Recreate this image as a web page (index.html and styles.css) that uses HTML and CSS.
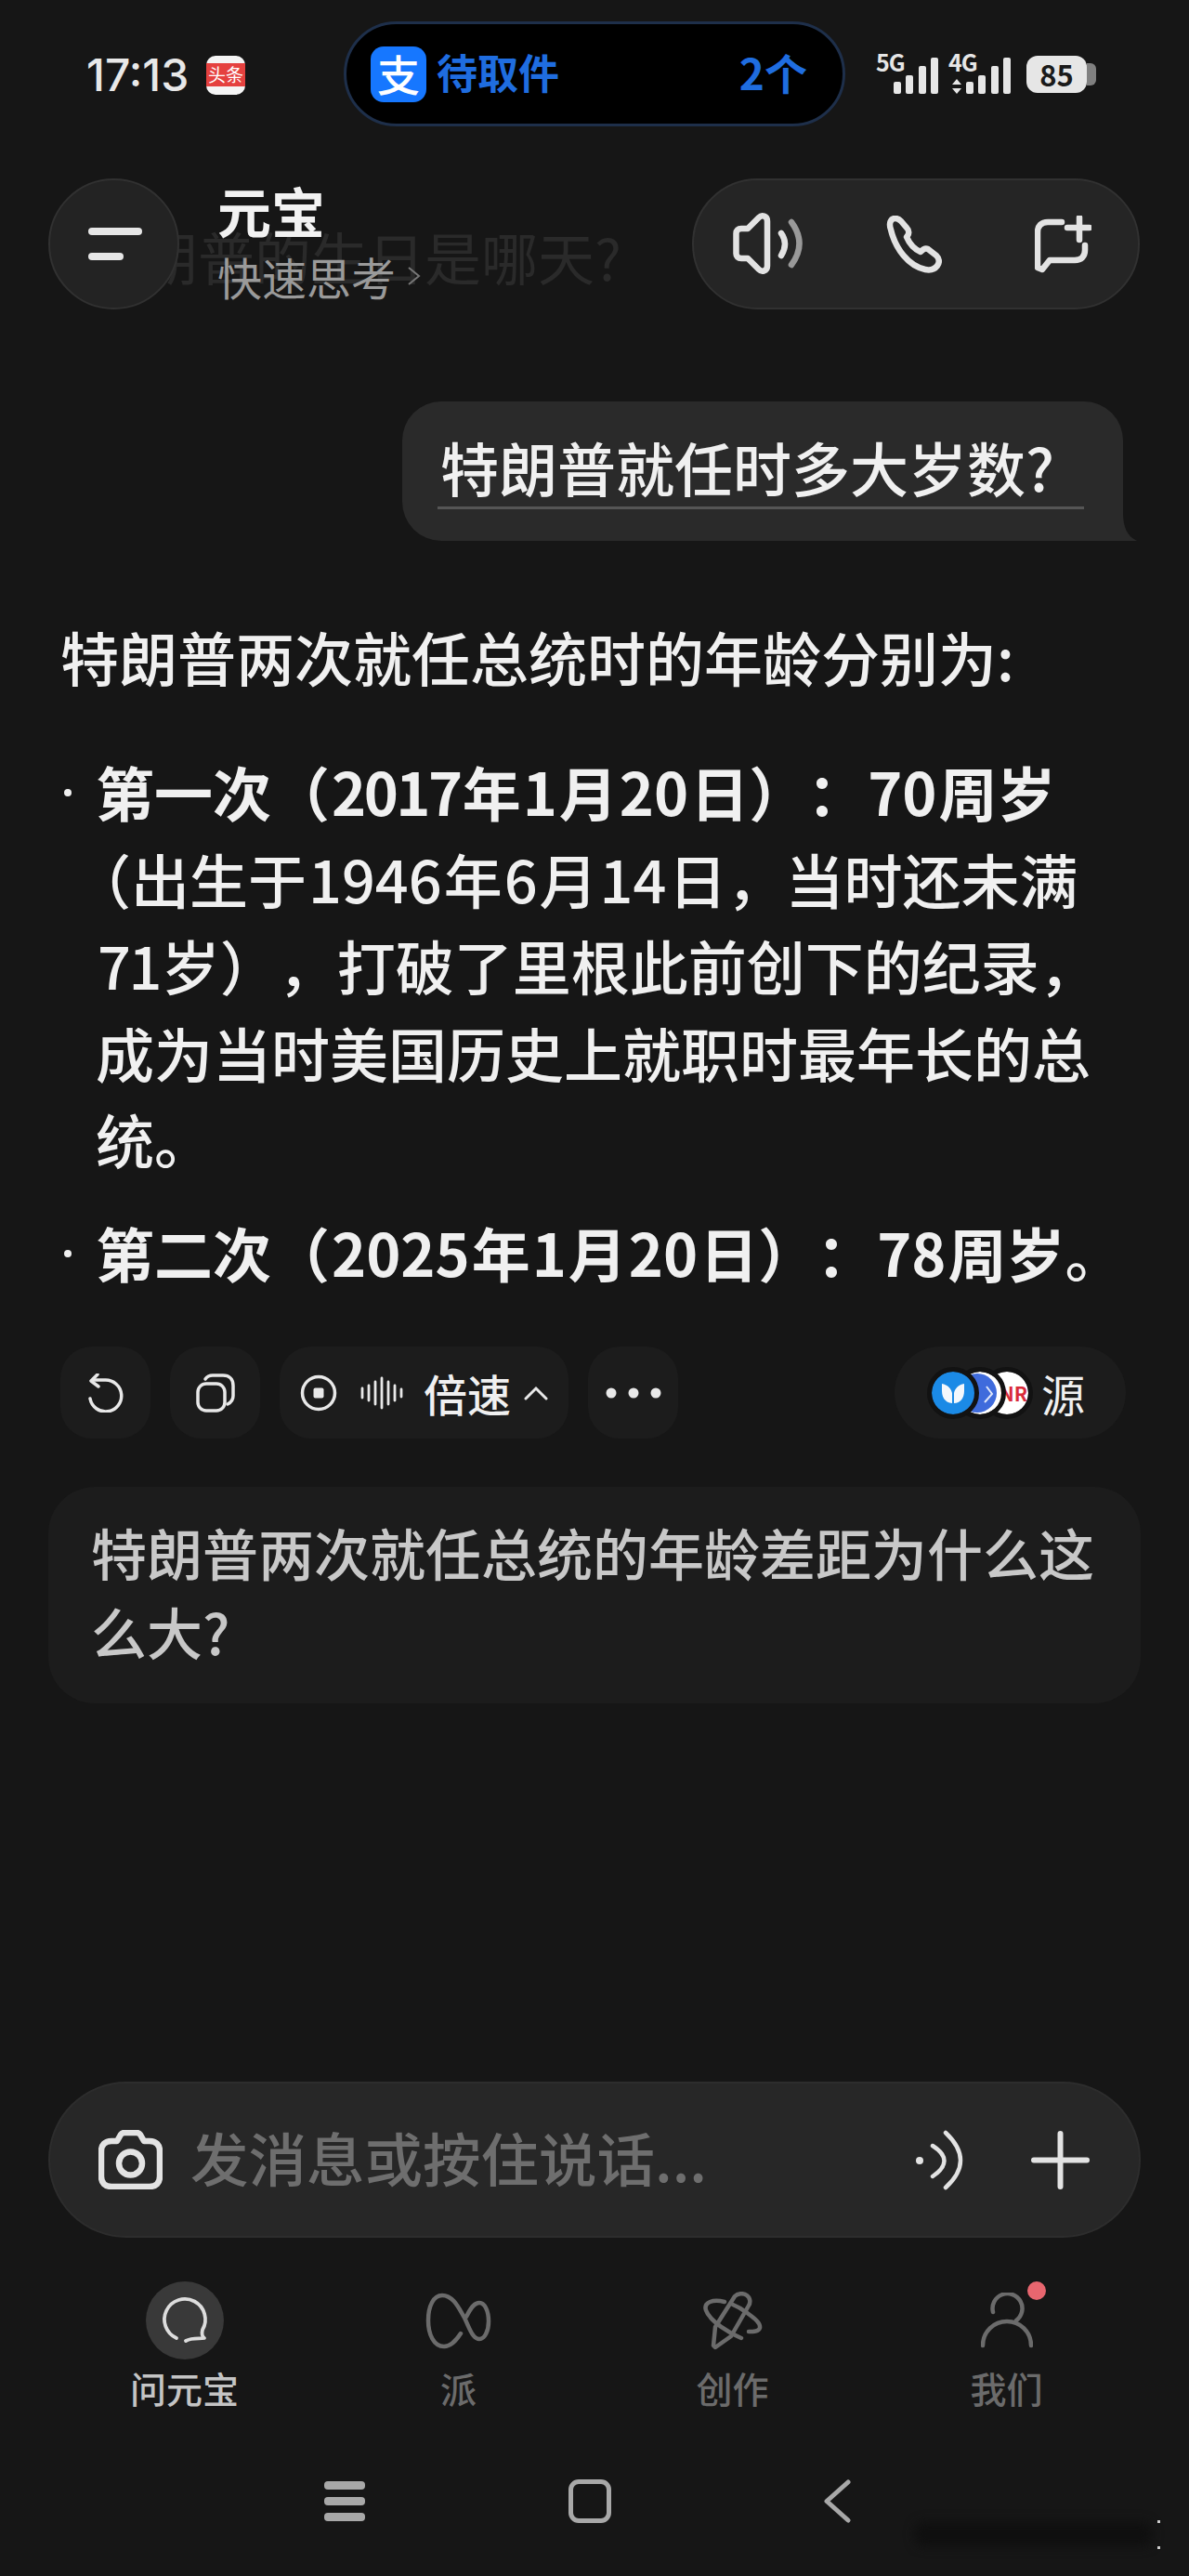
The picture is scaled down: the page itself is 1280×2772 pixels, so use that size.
FILE: index.html
```html
<!DOCTYPE html>
<html lang="zh-CN">
<head>
    <meta charset="UTF-8">
    <meta name="viewport" content="width=device-width, initial-scale=1.0">
    <title>元宝</title>
    <link rel="stylesheet" href="styles.css">
</head>
<body>
    <!-- Status bar -->
    <div class="status-bar">
        <span class="clock">17:13</span>
        <span class="toutiao"><span class="toutiao-band">头条</span></span>
        <div class="island">
            <span class="alipay">支</span>
            <span class="island-text">待取件</span>
            <span class="island-count">2个</span>
        </div>
        <div class="signal">
            <span class="net-label">5G</span>
            <div class="bars"><i class="b1"></i><i class="b2"></i><i class="b3"></i><i class="b4"></i></div>
        </div>
        <div class="signal signal-second">
            <span class="net-label">4G</span>
            <svg class="net-arrows" width="12" height="16" viewBox="0 0 12 16"><path d="M6 0 L11 6 H1 Z M1 10 H11 L6 16 Z" fill="#e6e6e6"/></svg>
            <div class="bars"><i class="b1"></i><i class="b2"></i><i class="b3"></i><i class="b4"></i></div>
        </div>
        <div class="battery"><span class="battery-level">85</span><span class="battery-tip"></span></div>
    </div>

    <!-- Top bar -->
    <header class="top-bar">
        <div class="ghost-row">特朗普的生日是哪天?</div>
        <button class="menu-button">
            <span class="menu-line"></span>
            <span class="menu-line menu-line-short"></span>
        </button>
        <div class="title-block">
            <div class="title">元宝</div>
            <div class="subtitle">快速思考
                <svg width="16" height="22" viewBox="0 0 16 22"><path d="M2 2 L13 11 L2 20" fill="none" stroke="#777" stroke-width="2"/></svg>
            </div>
        </div>
        <div class="top-actions">
            <svg width="78" height="68" viewBox="0 0 78 68" fill="none" stroke="#e3e3e3" stroke-width="6.5" stroke-linecap="round" stroke-linejoin="round">
                <path d="M37 9 C37 3 31 2 28 5 L16 17 H9 C5.5 17 3.5 19 3.5 22 V44 C3.5 47 5.5 49 9 49 H16 L28 61 C31 64 37 63 37 57 Z"/>
                <path d="M52 22 Q60 33 52 46"/>
                <path d="M63 10 Q80 33 63 56" stroke="#999"/>
            </svg>
            <svg width="60" height="62" viewBox="0 0 60 62" fill="none" stroke="#e3e3e3" stroke-width="6.5" stroke-linejoin="round">
                <path d="M5 15 C2.5 8 5 3.5 9 3 C12 2.7 14 4 16 6 L22 13 C25 16 25 20 22 23 C25 30 30 36 37 39 C39 37 41 34 45 36 L54 43 C57 46 58 50 55 54 C52 58 47 59 42 58 C24 54 10 36 5 15 Z"/>
            </svg>
            <svg class="new-chat" width="61" height="62" viewBox="0 0 61 62" fill="none" stroke="#e3e3e3" stroke-width="6.5" stroke-linecap="round" stroke-linejoin="round">
                <path d="M29 7 H14 C7 7 3 11 3 18 V56 L8 58 L16 48 H43 C50 48 54 44 54 37 V32"/>
                <path d="M35 13 H59 M48 2 V26"/>
            </svg>
        </div>
    </header>

    <!-- Chat -->
    <main class="chat">
        <div class="user-bubble">
            <span class="user-text">特朗普就任时多大岁数?</span>
            <svg class="bubble-tail" width="15" height="30" viewBox="0 0 15 30"><path d="M0 0 C0 14 4 25 15 30 H0 Z" fill="#2a2a2a"/></svg>
        </div>

        <p class="answer-lead">特朗普两次就任总统时的年龄分别为:</p>
        <ul class="answer-list">
            <li><strong>第一次（<span class="num num-tight">2017</span>年<span class="num">1</span>月<span class="num">20</span>日）：<span class="num">70</span>周岁</strong><br><span class="line-paren">（</span>出生于<span class="num">1946</span>年<span class="num">6</span>月<span class="num">14</span>日，当时还未满<br><span class="num num-tight">71</span>岁），打破了里根此前创下的纪录，<br>成为当时美国历史上就职时最年长的总<br>统。</li>
            <li><strong>第二次（<span class="num">2025</span>年<span class="num">1</span>月<span class="num">20</span>日）：<span class="num">78</span>周岁</strong>。</li>
        </ul>

        <div class="toolbar">
            <button class="tool-button">
                <svg width="42" height="42" viewBox="0 0 42 42" fill="none" stroke="#e8e8e8" stroke-width="3.5" stroke-linecap="round" stroke-linejoin="round">
                    <path d="M8 7 H20 A17 17 0 1 1 4 27"/>
                    <path d="M12 1 L5 8 L13 14"/>
                </svg>
            </button>
            <button class="tool-button">
                <svg width="42" height="42" viewBox="0 0 42 42" fill="none" stroke="#e8e8e8" stroke-width="3.5" stroke-linecap="round">
                    <rect x="2" y="11" width="29" height="29" rx="9"/>
                    <path d="M10 6 C12 3 14 2 18 2 H29 C36 2 40 6 40 13 V24 C40 28 38 31 34 33"/>
                </svg>
            </button>
            <button class="tool-button tool-speed">
                <svg width="40" height="42" viewBox="0 0 40 42" fill="none" stroke="#e8e8e8" stroke-width="3.5">
                    <circle cx="20" cy="21" r="17.5"/>
                    <rect x="14.5" y="15.5" width="11" height="11" rx="2" fill="#e8e8e8" stroke="none"/>
                </svg>
                <svg class="wave" width="46" height="42" viewBox="0 0 46 42" stroke="#e8e8e8" stroke-width="2.8" stroke-linecap="round">
                    <path d="M2 16 V26 M9 13 V29 M16 9 V33 M23 5 V37 M30 9 V33 M37 13 V29 M44 17 V25"/>
                </svg>
                <span class="speed-label">倍速</span>
                <svg width="26" height="16" viewBox="0 0 26 16" fill="none" stroke="#e8e8e8" stroke-width="3" stroke-linecap="round"><path d="M2 14 L13 3 L24 14"/></svg>
            </button>
            <button class="tool-button">
                <svg width="60" height="14" viewBox="0 0 60 14" fill="#e8e8e8"><circle cx="6" cy="7" r="5.5"/><circle cx="30" cy="7" r="5.5"/><circle cx="54" cy="7" r="5.5"/></svg>
            </button>
            <button class="tool-button tool-source">
                <span class="source-dot source-blue">
                    <svg width="26" height="24" viewBox="0 0 26 24" fill="#f4f8fc"><path d="M1 2 C7 3 11 7 12 12 V23 C5 23 1 17 1 10 Z M25 2 C19 3 15 7 14 12 V23 C21 23 25 17 25 10 Z"/></svg>
                </span>
                <span class="source-dot source-indigo">
                    <svg width="46" height="46" viewBox="0 0 46 46"><circle cx="23" cy="23" r="23" fill="#fff"/><circle cx="20" cy="23" r="21" fill="#3f6bdc"/><path d="M30 16 L36 24 L28 33" fill="none" stroke="#dfe7fa" stroke-width="2"/></svg>
                </span>
                <span class="source-dot source-white"><span class="source-nr">NR</span></span>
                <span class="source-label">源</span>
            </button>
        </div>

        <div class="suggestion">特朗普两次就任总统的年龄差距为什么这么大?</div>
    </main>

    <!-- Composer -->
    <div class="composer">
        <svg width="69" height="64" viewBox="0 0 69 64" fill="none" stroke="#e3e3e3" stroke-width="6.5" stroke-linejoin="round">
            <path d="M14 12 H20 L24 5 C25 3.5 26 3 28 3 H41 C43 3 44 3.5 45 5 L49 12 H55 C62 12 66 16 66 23 V50 C66 57 62 61 55 61 H14 C7 61 3 57 3 50 V23 C3 16 7 12 14 12 Z"/>
            <circle cx="34.5" cy="36" r="12.5"/>
        </svg>
        <span class="composer-placeholder">发消息或按住说话...</span>
        <svg class="composer-voice" width="55" height="65" viewBox="0 0 55 65" fill="none" stroke="#e3e3e3" stroke-width="4.5" stroke-linecap="round">
            <circle cx="7" cy="33" r="4" fill="#e3e3e3" stroke="none"/>
            <path d="M21 17 Q46 33 21 50"/>
            <path d="M35 3 Q67 33 35 62"/>
        </svg>
        <svg width="63" height="63" viewBox="0 0 63 63" stroke="#e3e3e3" stroke-width="6" stroke-linecap="round"><path d="M3 31.5 H60 M31.5 3 V60"/></svg>
    </div>

    <!-- Tabs -->
    <nav class="tabs">
        <div class="tab tab-active">
            <span class="tab-icon tab-icon-active">
                <svg width="84" height="84" viewBox="0 0 84 84" fill="none" stroke="#ddd" stroke-width="3.8" stroke-linecap="round" stroke-linejoin="round">
                    <path d="M33 61 A22 22 0 1 1 61 52 C60 56 60 59 63 61 C58 62 50 60 43 64"/>
                </svg>
            </span>
            <span class="tab-label">问元宝</span>
        </div>
        <div class="tab">
            <span class="tab-icon">
                <svg width="71" height="61" viewBox="0 0 71 61" fill="none" stroke="#6b6b6b" stroke-width="4.5" stroke-linecap="round">
                    <path d="M38 44 C32 53 27 58 20 58 C9 58 3 45 3 30 C3 14 9 3 18 3 C30 3 36 17 42 27 C47 38 51 50 58 50 C64 50 68 41 68 31 C68 20 64 11 58 11 C52 11 48 18 44 26"/>
                </svg>
            </span>
            <span class="tab-label">派</span>
        </div>
        <div class="tab">
            <span class="tab-icon">
                <svg width="65" height="63" viewBox="0 0 65 63" fill="none" stroke="#6b6b6b" stroke-width="4.5" stroke-linecap="round" stroke-linejoin="round">
                    <path d="M35 5 C38 2 44 1 48 4 C52 7 52 12 50 15 L31 48 L14 60 L12 58 L14 38 Z"/>
                    <path d="M42 50 C30 45 8 32 4 20 C1 11 12 8 24 11 M33 14 C38 16 43 19 47 22 C55 28 63 33 62 39 C61 43 55 43 50 43"/>
                </svg>
            </span>
            <span class="tab-label">创作</span>
        </div>
        <div class="tab">
            <span class="tab-icon">
                <svg width="56" height="60" viewBox="0 0 56 60" fill="none" stroke="#6b6b6b" stroke-width="4.5" stroke-linecap="round">
                    <path d="M13 21 A16 16 0 1 1 38 30"/>
                    <path d="M2 57 C2 42 14 31 28 31 C42 31 54 42 54 57"/>
                </svg>
                <span class="tab-badge"></span>
            </span>
            <span class="tab-label">我们</span>
        </div>
    </nav>

    <!-- System nav -->
    <div class="system-nav">
        <div class="nav-menu"><span></span><span></span><span></span></div>
        <div class="nav-home"></div>
        <svg width="29" height="47" viewBox="0 0 29 47" fill="none" stroke="#a8a8a8" stroke-width="5" stroke-linecap="round" stroke-linejoin="round"><path d="M26 3 L3 23.5 L26 44"/></svg>
    </div>
    <div class="watermark"></div>
    <div class="watermark-specks"></div>
</body>
</html>
```

FILE: styles.css
```css
* {
    box-sizing: border-box;
}

html,
body {
    margin: 0;
    height: 100%;
}

body {
    position: relative;
    display: flex;
    flex-direction: column;
    width: 1280px;
    height: 2772px;
    overflow: hidden;
    background-color: #161616;
    color: #f0f0f0;
    font-family: "Noto Sans CJK SC", "Noto Sans", sans-serif;
}

button {
    border: none;
    padding: 0;
    font-family: inherit;
    color: inherit;
}

svg {
    display: block;
    flex-shrink: 0;
}

/* Status bar */
.status-bar {
    display: flex;
    align-items: center;
    height: 113px;
    margin-top: 23px;
    padding-left: 93px;
}

.clock {
    width: 110px;
    font-family: Inter, sans-serif;
    font-size: 48px;
    line-height: 56px;
    font-weight: 500;
    white-space: nowrap;
    color: #e8e8e8;
    margin-top: 2px;
}

.toutiao {
    display: flex;
    align-items: center;
    width: 42px;
    height: 42px;
    margin-left: 19px;
    margin-top: 2px;
    border-radius: 10px;
    background-color: #f5f5f5;
}

.toutiao-band {
    width: 100%;
    height: 25px;
    line-height: 24px;
    text-align: center;
    font-size: 19px;
    color: #fff;
    background-color: #e5413f;
}

.island {
    display: flex;
    align-items: center;
    width: 540px;
    height: 113px;
    margin-left: 106px;
    padding: 0 38px 0 26px;
    border: 3px solid #1e2f4a;
    border-radius: 57px;
    background-color: #000;
}

.alipay {
    width: 60px;
    height: 60px;
    line-height: 56px;
    text-align: center;
    border-radius: 14px;
    background-color: #1677ff;
    color: #fff;
    font-size: 46px;
    font-weight: 500;
}

.island-text {
    margin: -6px 0 0 11px;
    font-size: 44px;
    font-weight: 700;
    color: #1f6de0;
}

.island-count {
    margin: -6px 0 0 auto;
    font-size: 46px;
    font-weight: 700;
    color: #1f6de0;
}

.signal {
    position: relative;
    display: flex;
    justify-content: flex-end;
    align-items: flex-end;
    width: 67px;
    height: 44px;
    margin-left: 33px;
    margin-top: -2px;
}

.signal-second {
    margin-left: 11px;
}

.net-label {
    position: absolute;
    left: 0;
    top: -3px;
    font-size: 25px;
    line-height: 25px;
    font-weight: 700;
    letter-spacing: -1px;
    color: #e6e6e6;
}

.net-arrows {
    position: absolute;
    left: 3px;
    bottom: 0;
}

.bars {
    display: flex;
    align-items: flex-end;
    gap: 5.5px;
}

.bars i {
    display: block;
    width: 8px;
    border-radius: 2px;
    background-color: #e6e6e6;
}

.bars .b1 {
    height: 13px;
}

.bars .b2 {
    height: 20px;
}

.bars .b3 {
    height: 30px;
}

.bars .b4 {
    height: 39px;
}

.battery {
    display: flex;
    align-items: center;
    margin-left: 17px;
}

.battery-level {
    width: 65px;
    height: 40px;
    line-height: 39px;
    text-align: center;
    border-radius: 12px;
    background-color: #e6e6e6;
    color: #1a1a1a;
    font-size: 31px;
    font-weight: 700;
}

.battery-tip {
    width: 10px;
    height: 24px;
    border-radius: 0 6px 6px 0;
    background-color: #808080;
}

/* Top bar */
.top-bar {
    position: relative;
    display: flex;
    align-items: center;
    height: 141px;
    margin-top: 56px;
    padding: 0 53px 0 52px;
}

.ghost-row {
    position: absolute;
    left: 91px;
    top: 44px;
    font-size: 61px;
    line-height: 80px;
    color: #2a2a2a;
}

.menu-button {
    position: relative;
    display: flex;
    flex-direction: column;
    justify-content: center;
    gap: 19px;
    width: 141px;
    height: 141px;
    padding-left: 41px;
    border: 2px solid #313131;
    border-radius: 50%;
    background-color: #232323;
}

.menu-line {
    display: block;
    width: 58px;
    height: 8px;
    border-radius: 4px;
    background-color: #e6e6e6;
}

.menu-line-short {
    width: 38px;
}

.title-block {
    position: relative;
    margin: 0 0 0 41px;
}

.title {
    font-size: 58px;
    line-height: 66px;
    font-weight: 700;
    color: #f2f2f2;
    margin-top: -8px;
}

.subtitle {
    display: flex;
    align-items: center;
    gap: 12px;
    font-size: 48px;
    line-height: 54px;
    color: #9a9a9a;
    margin-top: 11px;
}

.top-actions {
    position: relative;
    display: flex;
    align-items: center;
    gap: 87px;
    width: 482px;
    height: 141px;
    margin-left: auto;
    padding-left: 42px;
    border: 2px solid #313131;
    border-radius: 71px;
    background-color: #252525;
}

.new-chat {
    margin-left: 13px;
}

/* Chat */
.chat {
    display: flex;
    flex-direction: column;
    flex: 1;
}

.user-bubble {
    position: relative;
    align-self: flex-end;
    width: 776px;
    height: 150px;
    margin-top: 99px;
    margin-right: 71px;
    padding: 28px 43px 0 38px;
    border-radius: 42px 42px 0 42px;
    background-color: #2a2a2a;
}

.user-text {
    display: inline-block;
    font-size: 63px;
    font-weight: 500;
    line-height: 84px;
    height: 88px;
    padding: 0 3px;
    border-bottom: 3px solid #555;
    width: 696px;
    white-space: nowrap;
}

.bubble-tail {
    position: absolute;
    right: -15px;
    bottom: 0;
}

.answer-lead {
    margin: 77px 0 0 65px;
    font-size: 63px;
    font-weight: 500;
    line-height: 94px;
    white-space: nowrap;
}

.answer-list {
    list-style: none;
    margin: 51px 0 0;
    padding: 0 0 0 103px;
    font-size: 63px;
    font-weight: 500;
    line-height: 93.5px;
    white-space: nowrap;
    text-spacing-trim: space-all;
}

.answer-list li {
    position: relative;
}

.answer-list li + li {
    margin-top: 28px;
}

.answer-list li::before {
    content: "";
    position: absolute;
    left: -34px;
    top: 45px;
    width: 8px;
    height: 8px;
    border-radius: 50%;
    background-color: #f0f0f0;
}

.answer-list strong {
    font-weight: 700;
}

.num {
    padding: 0 2px;
}

.num-tight {
    letter-spacing: -2.5px;
}

.line-paren {
    margin-left: -25px;
}

.toolbar {
    display: flex;
    gap: 21px;
    margin-top: 56px;
    padding: 0 68px 0 65px;
}

.tool-button {
    display: flex;
    align-items: center;
    justify-content: center;
    width: 97px;
    height: 99px;
    border-radius: 34px;
    background-color: #1c1c1c;
}

.tool-speed {
    width: 311px;
}

.tool-speed .wave {
    margin-left: 25px;
}

.speed-label {
    margin: 0 14px 0 22px;
    font-size: 47px;
    font-weight: 500;
}

.tool-source {
    width: 249px;
    margin-left: auto;
    border-radius: 50px;
    justify-content: flex-start;
    padding-left: 40px;
}

.source-dot {
    position: relative;
    display: flex;
    align-items: center;
    justify-content: center;
    overflow: hidden;
    width: 46px;
    height: 46px;
    border-radius: 50%;
    outline: 5px solid #121212;
    margin-right: -17px;
}

.source-blue {
    z-index: 3;
    background-color: #1b8ae6;
}

.source-indigo {
    z-index: 2;
}

.source-white {
    z-index: 1;
    background-color: #fff;
    margin-right: 0;
}

.source-nr {
    margin-left: 14px;
    font-size: 21px;
    font-weight: 700;
    color: #d92b3a;
}

.source-label {
    margin-left: 14px;
    font-size: 47px;
}

.suggestion {
    width: 1176px;
    height: 233px;
    margin: 52px 0 0 52px;
    padding: 27px 46px 0 46px;
    border-radius: 50px;
    background-color: #1c1c1c;
    color: #c8c8c8;
    font-size: 60px;
    font-weight: 500;
    line-height: 85px;
}

/* Composer */
.composer {
    display: flex;
    align-items: center;
    width: 1176px;
    height: 168px;
    margin: 0 0 47px 52px;
    padding: 0 53px 0 52px;
    border: 2px solid #2d2d2d;
    border-radius: 84px;
    background-color: #272727;
}

.composer-placeholder {
    margin: -8px 0 0 30px;
    font-size: 62.5px;
    font-weight: 500;
    color: #6e6e6e;
}

.composer-voice {
    margin-left: auto;
    margin-right: 72px;
}

/* Tabs */
.tabs {
    display: grid;
    grid-template-columns: repeat(4, 295px);
    padding-left: 51px;
}

.tab {
    display: flex;
    flex-direction: column;
    align-items: center;
    gap: 7px;
}

.tab-icon {
    position: relative;
    display: flex;
    align-items: center;
    justify-content: center;
    width: 84px;
    height: 84px;
    border-radius: 50%;
}

.tab-icon-active {
    background-color: #393939;
}

.tab-badge {
    position: absolute;
    top: 0;
    right: 0;
    width: 20px;
    height: 20px;
    border-radius: 50%;
    background-color: #e8666f;
}

.tab-label {
    font-size: 39px;
    line-height: 46px;
    color: #6b6b6b;
    font-weight: 500;
}

.tab-active .tab-label {
    color: #c4c4c4;
}

/* System nav */
.system-nav {
    display: flex;
    align-items: center;
    height: 47px;
    margin: 76px 0 57px;
    padding-left: 349px;
}

.nav-menu {
    display: flex;
    flex-direction: column;
    justify-content: space-between;
    width: 44px;
    height: 43px;
}

.nav-menu span {
    height: 9px;
    border-radius: 4px;
    background-color: #a8a8a8;
}

.nav-home {
    width: 46px;
    height: 47px;
    margin: 0 229px 0 219px;
    border: 5px solid #a8a8a8;
    border-radius: 11px;
}

.watermark {
    position: absolute;
    left: 985px;
    top: 2714px;
    width: 255px;
    height: 26px;
    border-radius: 10px;
    background-color: #0f0f0f;
    filter: blur(6px);
}

.watermark-specks {
    position: absolute;
    left: 1246px;
    top: 2712px;
    width: 3px;
    height: 3px;
    background-color: #ccc;
    box-shadow: 0 28px 0 #ccc;
}
```
